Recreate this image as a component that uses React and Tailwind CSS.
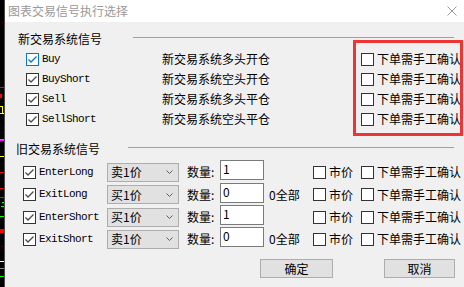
import React from 'react';

const cjk = { fontFamily: '"Noto Sans CJK SC", "Microsoft YaHei", sans-serif' };
const mono = { fontFamily: '"Liberation Mono", "Courier New", monospace' };

const Check = ({ checked, focus }) => (
  <span
    className={`flex h-[13px] w-[13px] shrink-0 items-center justify-center border bg-white ${
      focus ? 'border-[#0078d7]' : 'border-[#333333]'
    }`}
  >
    {checked && (
      <svg width="11" height="11" viewBox="0 0 11 11">
        <polyline
          points="1.5,5.5 4,8 9.5,2.5"
          fill="none"
          stroke={focus ? '#0078d7' : '#4a4a4a'}
          strokeWidth="1.3"
        />
      </svg>
    )}
  </span>
);

const Strip = () => (
  <svg width="5" height="287" className="block shrink-0">
    <rect x="0" y="0" width="4" height="287" fill="#000" />
    <rect x="4" y="0" width="1" height="287" fill="#4a4a4a" />
    <rect x="2" y="22" width="1" height="1" fill="#8b0000" />
    <rect x="0" y="87" width="4" height="1" fill="#ff0000" />
    <rect x="0" y="94" width="2" height="4" fill="#ff0000" />
    <rect x="0" y="106" width="3" height="1" fill="#ffff00" />
    <rect x="2" y="106" width="1" height="8" fill="#ffff00" />
    <rect x="0" y="113" width="4" height="1" fill="#ffff00" />
    <rect x="0" y="139" width="4" height="1" fill="#00ff00" />
    <rect x="0" y="140" width="4" height="1" fill="#ff00ff" />
    <rect x="0" y="156" width="4" height="1" fill="#ffff00" />
    <rect x="0" y="172" width="4" height="1" fill="#ff0000" />
    <rect x="0" y="188" width="4" height="1" fill="#ff0000" />
    <rect x="0" y="197" width="4" height="1" fill="#ff0000" />
    <rect x="2" y="202" width="2" height="1" fill="#00ff00" />
    <rect x="1" y="206" width="3" height="1" fill="#00ff00" />
    <rect x="0" y="216" width="4" height="1" fill="#00ff00" />
    <rect x="0" y="229" width="4" height="4" fill="#ff0000" />
    <rect x="2" y="246" width="1" height="1" fill="#8b0000" />
    <rect x="0" y="261" width="4" height="1" fill="#ffffff" />
    <rect x="0" y="268" width="4" height="1" fill="#888888" />
    <rect x="0" y="276" width="4" height="1" fill="#00ff00" />
  </svg>
);

const newSignals = [
  { name: 'Buy', desc: '新交易系统多头开仓', focus: true },
  { name: 'BuyShort', desc: '新交易系统空头开仓' },
  { name: 'Sell', desc: '新交易系统多头平仓' },
  { name: 'SellShort', desc: '新交易系统空头平仓' },
];

const oldSignals = [
  { name: 'EnterLong', price: '卖1价', qty: '1', all: false, h: 'h-[22px]' },
  { name: 'ExitLong', price: '买1价', qty: '0', all: true, h: 'h-[23px]' },
  { name: 'EnterShort', price: '买1价', qty: '1', all: false, h: 'h-[22px]' },
  { name: 'ExitShort', price: '卖1价', qty: '0', all: true, h: 'h-[22px]' },
];

export default function App() {
  return (
    <div className="flex h-[287px] w-[464px] overflow-hidden bg-[#f0f0f0] text-[12px] leading-none text-black" style={cjk}>
      <Strip />
      <div className="relative flex flex-1 flex-col">
        {/* title bar */}
        <div className="flex h-[22px] items-center justify-between bg-white pl-[3px] pr-[7px]">
          <span className="text-[12px] text-[#999999]">图表交易信号执行选择</span>
          <svg width="10" height="10" viewBox="0 0 10 10">
            <path d="M0.5 0.5 L9.5 9.5 M9.5 0.5 L0.5 9.5" stroke="#9a9a9a" strokeWidth="1" />
          </svg>
        </div>

        {/* new signals */}
        <div className="mt-[10px] flex h-[14px] items-start pl-[13px] pr-[10px]">
          <span className="w-[115px] whitespace-nowrap leading-[13px]">新交易系统信号</span>
          <div className="mt-[5px] h-px flex-1 bg-[#a0a0a0]" />
        </div>
        <div className="mt-[3px] flex flex-col">
          {newSignals.map((s) => (
            <div key={s.name} className="flex h-[20px] items-center pl-[21px]">
              <Check checked focus={s.focus} />
              <span className="ml-[3px] w-[120px] text-[11px] tracking-[-0.6px]" style={mono}>
                {s.name}
              </span>
              <span className="w-[199px] whitespace-nowrap">{s.desc}</span>
              <Check />
              <span className="ml-[3px] whitespace-nowrap">下单需手工确认</span>
            </div>
          ))}
        </div>

        {/* old signals */}
        <div className="mt-[13px] flex h-[14px] items-start pl-[11px] pr-[10px]">
          <span className="w-[112px] whitespace-nowrap leading-[13px]">旧交易系统信号</span>
          <div className="mt-[5px] h-px flex-1 bg-[#a0a0a0]" />
        </div>
        <div className="mt-[5px] flex flex-col">
          {oldSignals.map((s) => (
            <div key={s.name} className={`flex items-center pl-[18px] ${s.h}`}>
              <Check checked />
              <span className="ml-[3px] w-[68px] text-[11px] tracking-[-0.6px]" style={mono}>
                {s.name}
              </span>
              <div className="flex h-[19px] w-[72px] items-center justify-between border border-[#adadad] bg-[#e1e1e1] pl-[3px] pr-[5px]">
                <span>{s.price}</span>
                <svg width="7" height="4" viewBox="0 0 7 4">
                  <polyline points="0.5,0.5 3.5,3.5 6.5,0.5" fill="none" stroke="#606060" strokeWidth="1" />
                </svg>
              </div>
              <span className="ml-[8px] w-[33px] whitespace-nowrap">数量:</span>
              <div className="mb-[4px] flex h-[20px] w-[44px] items-start border border-[#7a7a7a] bg-white pl-[2px] pt-[1px]">
                <span className="leading-[13px]">{s.qty}</span>
              </div>
              <span className="ml-[5px] w-[44px] whitespace-nowrap">{s.all ? '0全部' : ''}</span>
              <Check />
              <span className="ml-[3px] w-[32px] whitespace-nowrap">市价</span>
              <Check />
              <span className="ml-[3px] whitespace-nowrap">下单需手工确认</span>
            </div>
          ))}
        </div>

        {/* buttons */}
        <div className="mt-[9px] flex gap-[51px] pl-[255px]">
          <button className="flex h-[19px] w-[73px] items-center justify-center border border-[#adadad] bg-[#e1e1e1]">
            确定
          </button>
          <button className="flex h-[19px] w-[71px] items-center justify-center border border-[#adadad] bg-[#e1e1e1]">
            取消
          </button>
        </div>

        {/* red highlight annotation */}
        <div className="absolute left-[348px] top-[40px] h-[96px] w-[110px] border-[3px] border-[#ee3535]" />
      </div>
    </div>
  );
}
